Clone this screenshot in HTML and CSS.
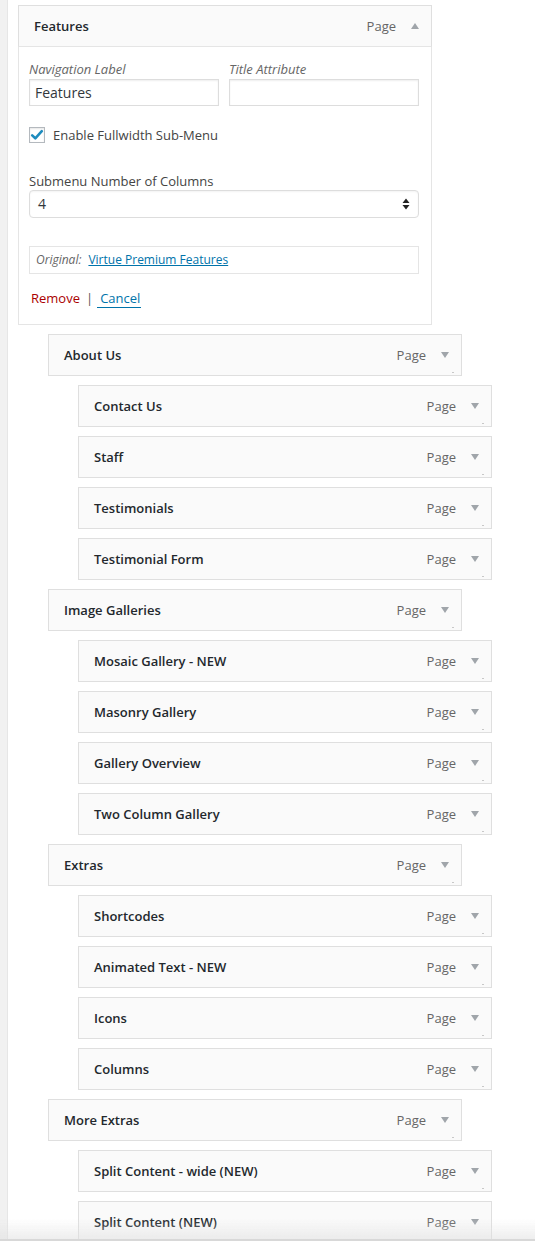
FILE: index.html
```html
<!DOCTYPE html>
<html>
<head>
<meta charset="utf-8">
<link rel="stylesheet" href="styles.css">
</head>
<body>
<div class="wrap">
  <ul class="menu">
    <li class="item depth-0 active">
      <div class="handle">
        <span class="title">Features</span>
        <span class="type">Page</span>
        <span class="toggle"><svg width="8" height="6" viewBox="0 0 8 6"><path d="M0 6 L4 0 L8 6 Z" fill="#a0a5aa"/></svg></span>
      </div>
      <div class="settings">
        <div class="fields">
          <label class="field">
            <span class="lbl">Navigation Label</span>
            <input class="txt" type="text" value="Features">
          </label>
          <label class="field">
            <span class="lbl">Title Attribute</span>
            <input class="txt" type="text" value="">
          </label>
        </div>
        <div class="check-row">
          <span class="checkbox"><svg width="14" height="14" viewBox="0 0 14 14"><path d="M2.2 7.4 L5.3 10.3 L11.8 3.2" fill="none" stroke="#1e8cbe" stroke-width="2.6" stroke-linecap="round" stroke-linejoin="round"/></svg></span>
          <span class="check-label">Enable Fullwidth Sub-Menu</span>
        </div>
        <div class="sel-label">Submenu Number of Columns</div>
        <div class="select">
          <span class="sel-value">4</span>
          <svg width="8" height="12" viewBox="0 0 8 12"><path d="M0.5 5 L4 0.5 L7.5 5 Z M0.5 7 L4 11.5 L7.5 7 Z" fill="#222"/></svg>
        </div>
        <div class="original">
          <span class="orig-lbl">Original:</span>
          <a class="orig-link" href="#">Virtue Premium Features</a>
        </div>
        <div class="actions">
          <a class="remove" href="#">Remove</a>
          <span class="sep">|</span>
          <a class="cancel" href="#">Cancel</a>
        </div>
      </div>
    </li>
    <li class="item depth-1"><div class="handle"><span class="title">About Us</span><span class="type">Page</span><span class="toggle"><svg width="8" height="6" viewBox="0 0 8 6"><path d="M0 0 L8 0 L4 6 Z" fill="#a0a5aa"/></svg></span></div></li>
    <li class="item depth-2"><div class="handle"><span class="title">Contact Us</span><span class="type">Page</span><span class="toggle"><svg width="8" height="6" viewBox="0 0 8 6"><path d="M0 0 L8 0 L4 6 Z" fill="#a0a5aa"/></svg></span></div></li>
    <li class="item depth-2"><div class="handle"><span class="title">Staff</span><span class="type">Page</span><span class="toggle"><svg width="8" height="6" viewBox="0 0 8 6"><path d="M0 0 L8 0 L4 6 Z" fill="#a0a5aa"/></svg></span></div></li>
    <li class="item depth-2"><div class="handle"><span class="title">Testimonials</span><span class="type">Page</span><span class="toggle"><svg width="8" height="6" viewBox="0 0 8 6"><path d="M0 0 L8 0 L4 6 Z" fill="#a0a5aa"/></svg></span></div></li>
    <li class="item depth-2"><div class="handle"><span class="title">Testimonial Form</span><span class="type">Page</span><span class="toggle"><svg width="8" height="6" viewBox="0 0 8 6"><path d="M0 0 L8 0 L4 6 Z" fill="#a0a5aa"/></svg></span></div></li>
    <li class="item depth-1"><div class="handle"><span class="title">Image Galleries</span><span class="type">Page</span><span class="toggle"><svg width="8" height="6" viewBox="0 0 8 6"><path d="M0 0 L8 0 L4 6 Z" fill="#a0a5aa"/></svg></span></div></li>
    <li class="item depth-2"><div class="handle"><span class="title">Mosaic Gallery - NEW</span><span class="type">Page</span><span class="toggle"><svg width="8" height="6" viewBox="0 0 8 6"><path d="M0 0 L8 0 L4 6 Z" fill="#a0a5aa"/></svg></span></div></li>
    <li class="item depth-2"><div class="handle"><span class="title">Masonry Gallery</span><span class="type">Page</span><span class="toggle"><svg width="8" height="6" viewBox="0 0 8 6"><path d="M0 0 L8 0 L4 6 Z" fill="#a0a5aa"/></svg></span></div></li>
    <li class="item depth-2"><div class="handle"><span class="title">Gallery Overview</span><span class="type">Page</span><span class="toggle"><svg width="8" height="6" viewBox="0 0 8 6"><path d="M0 0 L8 0 L4 6 Z" fill="#a0a5aa"/></svg></span></div></li>
    <li class="item depth-2"><div class="handle"><span class="title">Two Column Gallery</span><span class="type">Page</span><span class="toggle"><svg width="8" height="6" viewBox="0 0 8 6"><path d="M0 0 L8 0 L4 6 Z" fill="#a0a5aa"/></svg></span></div></li>
    <li class="item depth-1"><div class="handle"><span class="title">Extras</span><span class="type">Page</span><span class="toggle"><svg width="8" height="6" viewBox="0 0 8 6"><path d="M0 0 L8 0 L4 6 Z" fill="#a0a5aa"/></svg></span></div></li>
    <li class="item depth-2"><div class="handle"><span class="title">Shortcodes</span><span class="type">Page</span><span class="toggle"><svg width="8" height="6" viewBox="0 0 8 6"><path d="M0 0 L8 0 L4 6 Z" fill="#a0a5aa"/></svg></span></div></li>
    <li class="item depth-2"><div class="handle"><span class="title">Animated Text - NEW</span><span class="type">Page</span><span class="toggle"><svg width="8" height="6" viewBox="0 0 8 6"><path d="M0 0 L8 0 L4 6 Z" fill="#a0a5aa"/></svg></span></div></li>
    <li class="item depth-2"><div class="handle"><span class="title">Icons</span><span class="type">Page</span><span class="toggle"><svg width="8" height="6" viewBox="0 0 8 6"><path d="M0 0 L8 0 L4 6 Z" fill="#a0a5aa"/></svg></span></div></li>
    <li class="item depth-2"><div class="handle"><span class="title">Columns</span><span class="type">Page</span><span class="toggle"><svg width="8" height="6" viewBox="0 0 8 6"><path d="M0 0 L8 0 L4 6 Z" fill="#a0a5aa"/></svg></span></div></li>
    <li class="item depth-1"><div class="handle"><span class="title">More Extras</span><span class="type">Page</span><span class="toggle"><svg width="8" height="6" viewBox="0 0 8 6"><path d="M0 0 L8 0 L4 6 Z" fill="#a0a5aa"/></svg></span></div></li>
    <li class="item depth-2"><div class="handle"><span class="title">Split Content - wide (NEW)</span><span class="type">Page</span><span class="toggle"><svg width="8" height="6" viewBox="0 0 8 6"><path d="M0 0 L8 0 L4 6 Z" fill="#a0a5aa"/></svg></span></div></li>
    <li class="item depth-2"><div class="handle"><span class="title">Split Content (NEW)</span><span class="type">Page</span><span class="toggle"><svg width="8" height="6" viewBox="0 0 8 6"><path d="M0 0 L8 0 L4 6 Z" fill="#a0a5aa"/></svg></span></div></li>
  </ul>
</div>
<div class="bottom-fade"></div>
</body>
</html>
```

FILE: styles.css
```css
html, body {
  margin: 0;
  padding: 0;
  background: #fff;
}
body {
  font-family: "Open Sans", "Noto Sans", sans-serif;
  font-size: 13px;
  color: #444;
}
.wrap {
  border-left: 7px solid #f1f1f1;
  box-shadow: inset 1px 0 0 #e6e6e6;
  min-height: 1300px;
}
.menu {
  list-style: none;
  margin: 0;
  padding: 5px 0 0 11px;
}
.item {
  width: 414px;
  margin-bottom: 9px;
  position: relative;
}
.depth-1 { margin-left: 30px; }
.depth-2 { margin-left: 60px; }
.handle {
  box-sizing: border-box;
  height: 42px;
  border: 1px solid #dfdfdf;
  background: #fafafa;
  display: flex;
  align-items: center;
  padding: 0 6px 0 15px;
}
.item:not(.active) .handle::after {
  content: "";
  position: absolute;
  right: 8px;
  top: 38px;
  width: 2px;
  height: 1px;
  background: #c8c8c8;
}
.title {
  flex: 1;
  font-weight: 600;
  color: #23282d;
  font-size: 13px;
  line-height: 20px;
}
.type {
  color: #666;
  font-size: 13px;
  line-height: 20px;
  margin-right: 9px;
}
.toggle {
  width: 20px;
  display: flex;
  justify-content: center;
  align-items: center;
}
.active .handle {
  border-bottom-color: #e5e5e5;
}
.settings {
  box-sizing: border-box;
  border: 1px solid #e5e5e5;
  border-top: none;
  background: #fff;
  padding: 13px 12px 16px 10px;
}
.fields {
  display: flex;
  gap: 10px;
}
.field {
  display: flex;
  flex-direction: column;
  width: 190px;
}
.lbl {
  font-style: italic;
  color: #666;
  line-height: 18px;
  margin-bottom: 1px;
}
.txt {
  box-sizing: border-box;
  height: 27px;
  margin: 0;
  border: 1px solid #ddd;
  box-shadow: inset 0 1px 2px rgba(0,0,0,0.07);
  font-family: "Open Sans", "Noto Sans", sans-serif;
  font-size: 14px;
  color: #32373c;
  padding: 0 5px;
  background: #fff;
  outline: none;
}
.check-row {
  display: flex;
  align-items: center;
  margin-top: 21px;
  height: 16px;
}
.checkbox {
  box-sizing: border-box;
  width: 16px;
  height: 16px;
  border: 1px solid #b4b9be;
  background: #fff;
  box-shadow: inset 0 1px 2px rgba(0,0,0,0.1);
  display: flex;
  align-items: center;
  justify-content: center;
}
.check-label {
  margin-left: 8px;
  color: #444;
  line-height: 16px;
}
.sel-label {
  margin-top: 29px;
  line-height: 18px;
  color: #444;
}
.select {
  box-sizing: border-box;
  height: 28px;
  border: 1px solid #ddd;
  border-radius: 4px;
  box-shadow: inset 0 1px 2px rgba(0,0,0,0.05);
  display: flex;
  align-items: center;
  justify-content: space-between;
  padding: 0 8px 1px 8px;
}
.sel-value {
  font-size: 14px;
  color: #32373c;
}
.original {
  box-sizing: border-box;
  margin-top: 28px;
  height: 28px;
  border: 1px solid #e5e5e5;
  display: flex;
  align-items: center;
  padding: 0 6px 2px 6px;
  gap: 7px;
}
.orig-lbl {
  font-style: italic;
  color: #666;
  font-size: 12px;
}
.orig-link {
  color: #0073aa;
  text-decoration: underline;
  font-size: 12px;
}
.actions {
  margin-top: 14px;
  line-height: 20px;
  display: flex;
  align-items: center;
  padding-left: 2px;
}
.remove {
  color: #a00;
  text-decoration: none;
}
.sep {
  color: #555;
  margin: 0 4px 0 6px;
}
.cancel {
  color: #0073aa;
  text-decoration: none;
  border-bottom: 1px solid #0073aa;
  padding: 0 1px 0 3px;
  line-height: 18px;
}
.bottom-fade {
  position: fixed;
  left: 0;
  right: 0;
  bottom: 0;
  height: 20px;
  background: linear-gradient(to bottom, rgba(240,240,240,0), rgba(225,225,225,0.55));
  border-bottom: 2px solid #d8d8d8;
}
```
